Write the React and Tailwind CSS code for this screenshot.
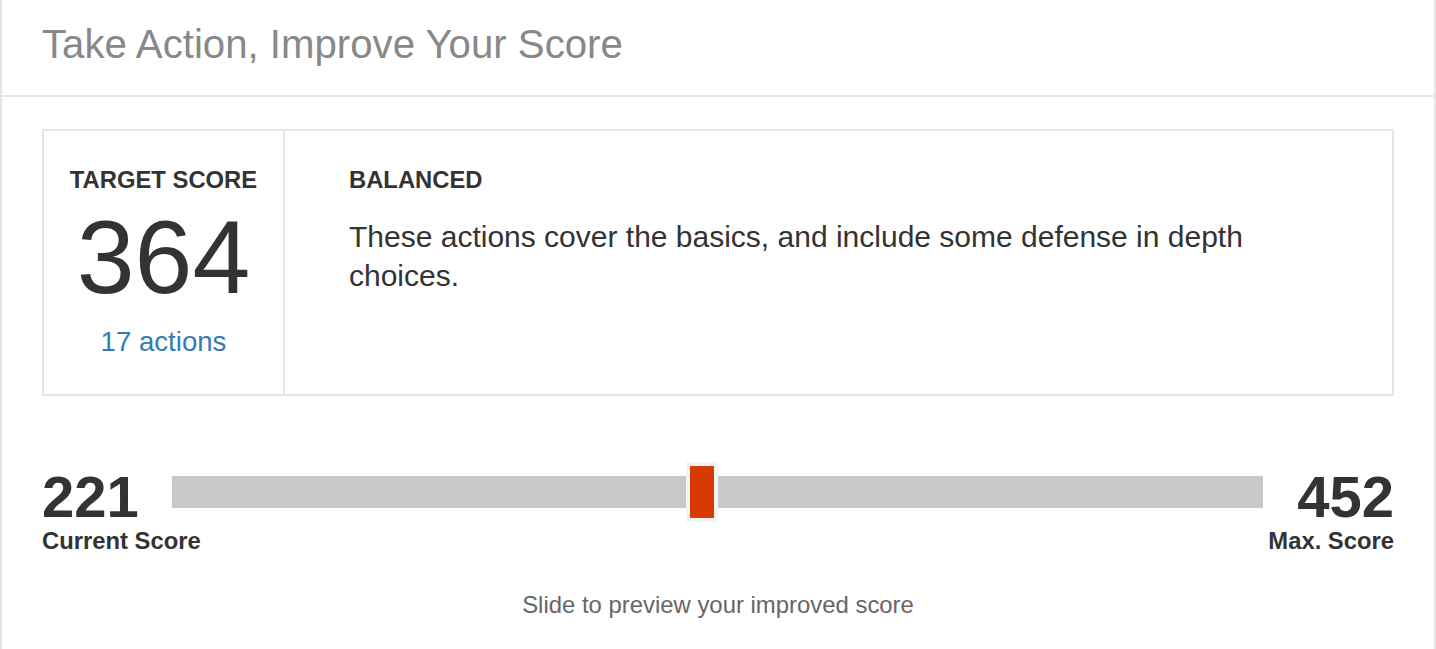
import React from 'react';

export default function App() {
    const target = 364;
    const current = 221;
    const max = 452;

    return (
        <div className="min-h-screen bg-white font-['Liberation_Sans',Arial,sans-serif] text-[#333]">
            <div className="h-[649px] border-x-2 border-[#e5e5e5]">
                {/* Header */}
                <div className="h-[97px] border-b-2 border-[#e5e5e5] flex items-center px-10">
                    <h1 className="text-[40.2px] leading-none text-[#888] pb-[4px]">Take Action, Improve Your Score</h1>
                </div>

                <div className="px-10 pt-[32px]">
                    {/* Target score card */}
                    <div className="h-[267px] border-2 border-[#e5e5e5] flex">
                        <div className="w-[241px] shrink-0 border-r-2 border-[#e5e5e5] flex flex-col items-center pt-[37px]">
                            <p className="text-[23.8px] leading-none font-bold uppercase">Target Score</p>
                            <p className="mt-[13px] text-[104px] leading-none">{target}</p>
                            <a href="#" className="mt-[19px] text-[27.6px] leading-none text-[#337ab7]">17 actions</a>
                        </div>
                        <div className="flex-1 pl-[64px] pr-[64px] pt-[37px]">
                            <p className="text-[23.8px] leading-none font-bold uppercase">Balanced</p>
                            <p className="mt-[25px] text-[30px] leading-[39px]">
                                These actions cover the basics, and include some defense in depth choices.
                            </p>
                        </div>
                    </div>

                    {/* Slider */}
                    <div className="mt-[74px]">
                        <div className="flex items-start">
                            <div className="w-[130px] shrink-0 text-[58px] leading-[54px] font-bold">{current}</div>
                            <div className="relative flex-1 h-[32px] mt-[6px] bg-[#c8c8c8]">
                                <div className="absolute left-[47.1%] top-[-14px] w-[32px] h-[60px] bg-[#f4f4f4] p-[4px]">
                                    <div className="w-full h-full bg-[#d83b01]" />
                                </div>
                            </div>
                            <div className="w-[131px] shrink-0 text-right text-[58px] leading-[54px] font-bold">{max}</div>
                        </div>
                        <div className="flex justify-between text-[23.8px] leading-none font-bold mt-[5px]">
                            <span>Current Score</span>
                            <span>Max. Score</span>
                        </div>
                    </div>
                </div>

                <p className="mt-[40px] text-center text-[23.9px] leading-none text-[#666]">Slide to preview your improved score</p>
            </div>
        </div>
    );
}
